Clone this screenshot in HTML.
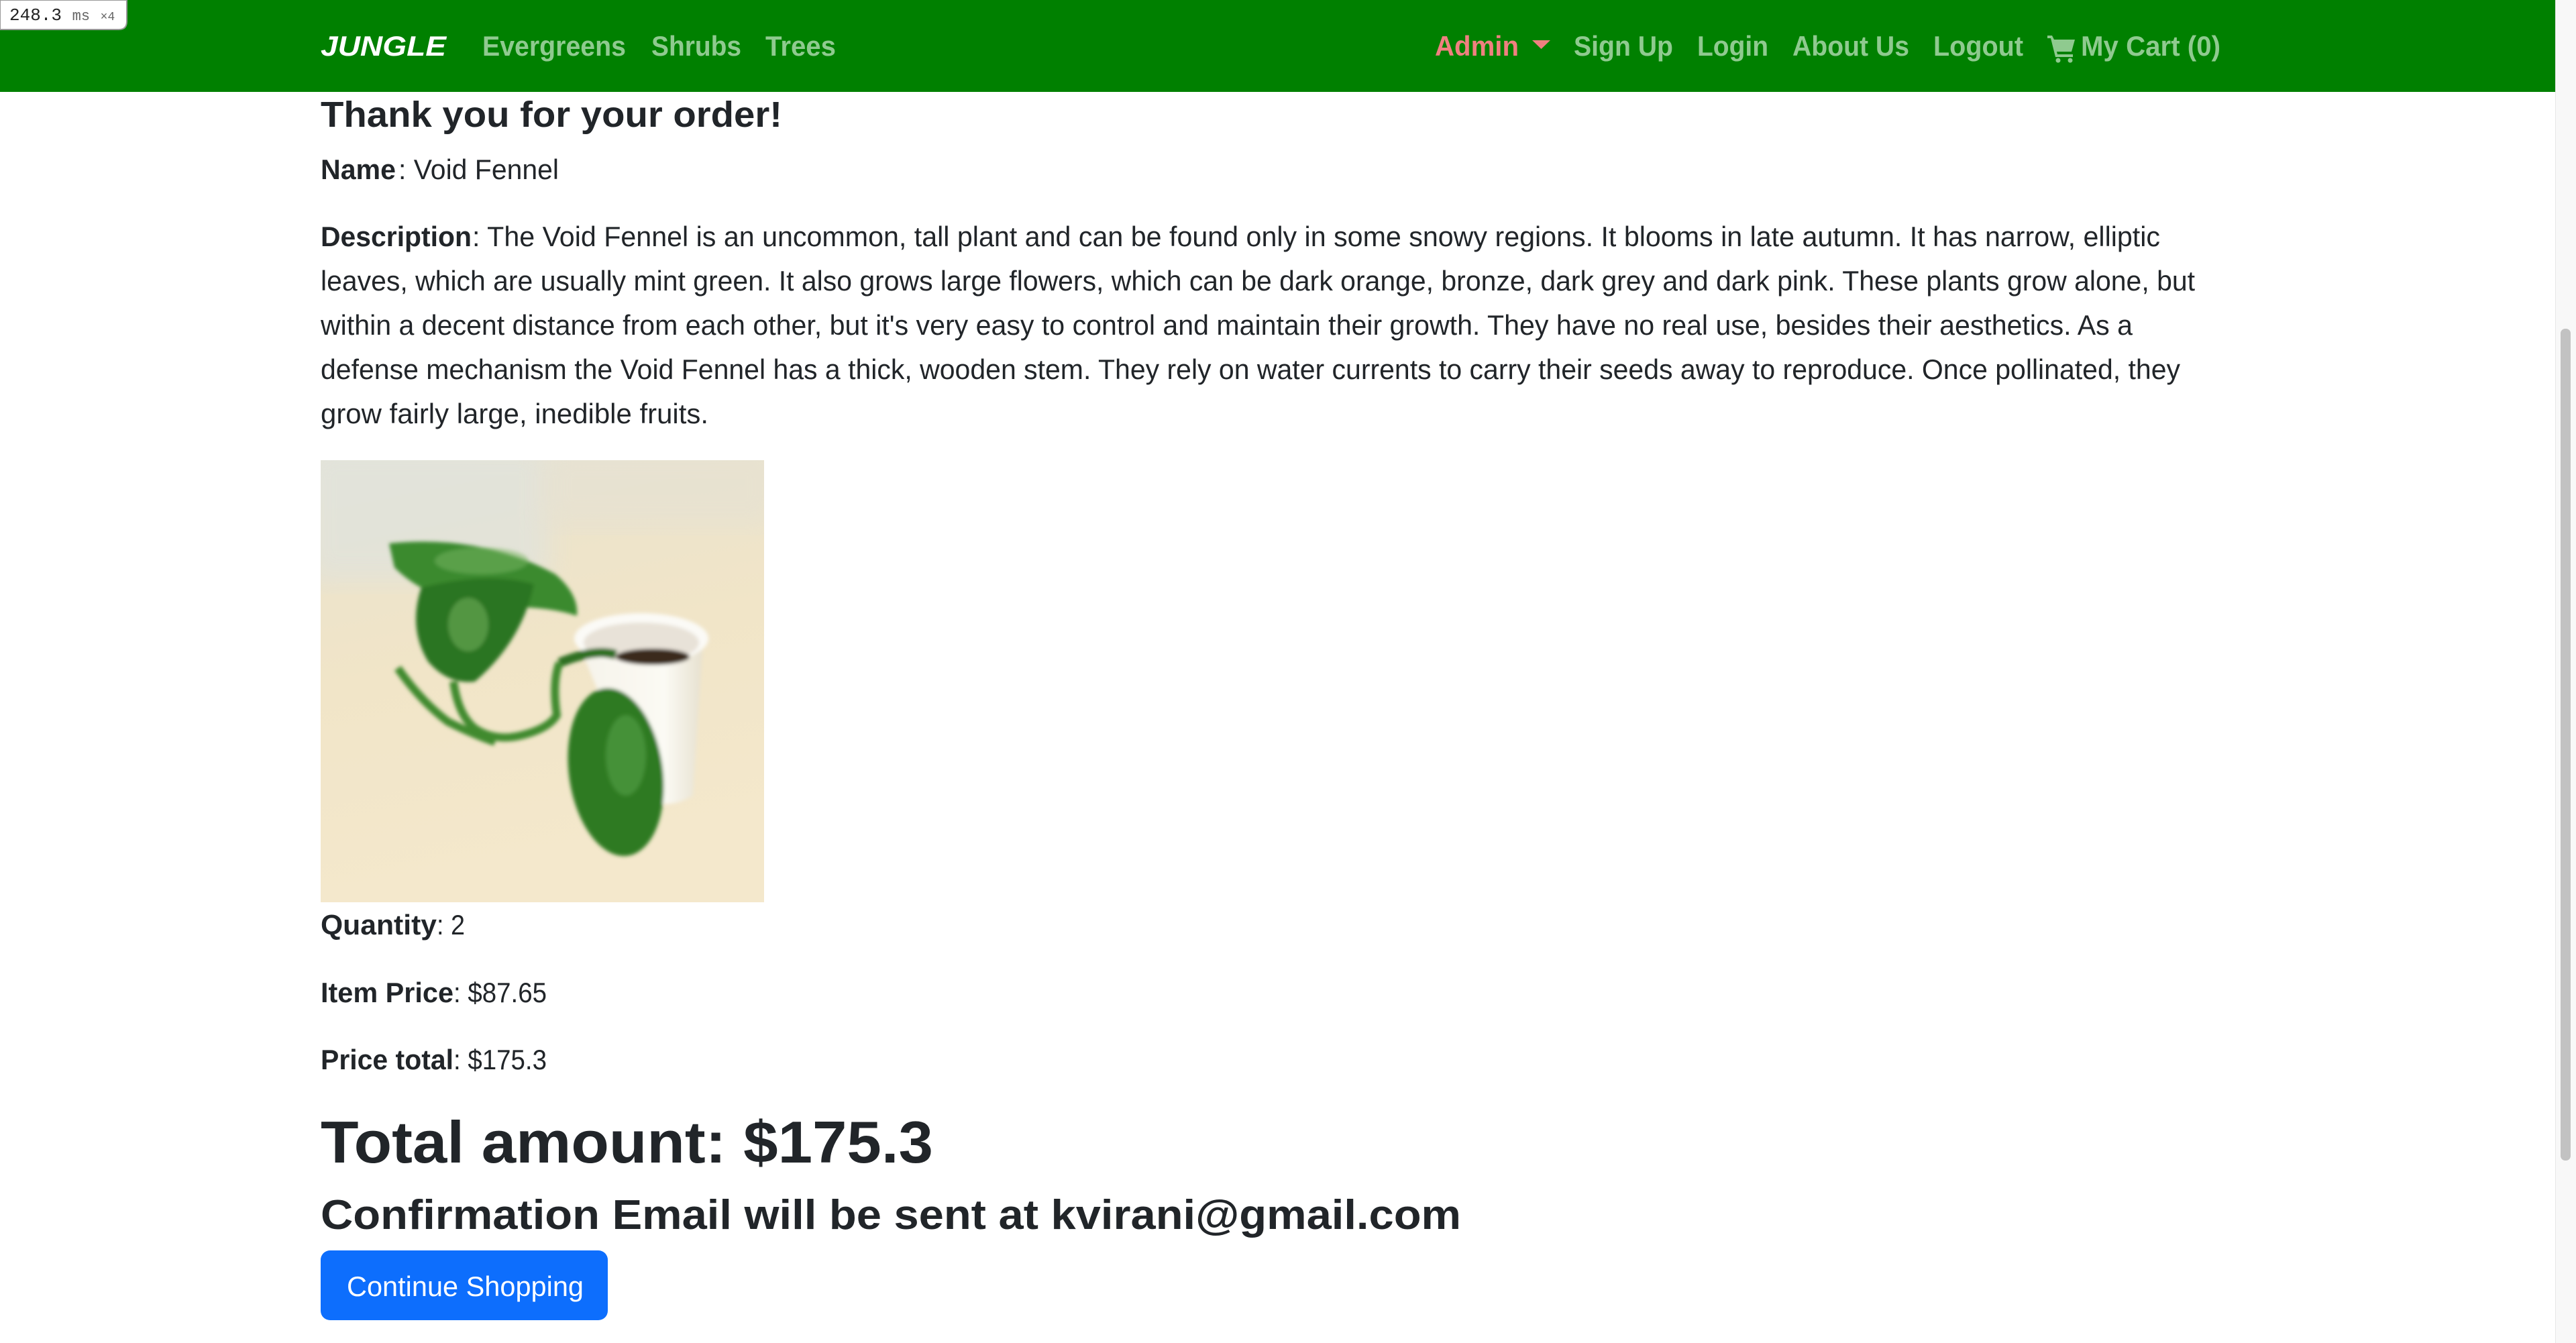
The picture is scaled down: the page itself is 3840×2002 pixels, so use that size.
<!DOCTYPE html>
<html><head><meta charset="utf-8"><style>
html,body{margin:0;padding:0;width:3840px;height:2002px;overflow:hidden;background:#fff}
svg{display:block}
</style></head><body>
<svg width="3840" height="2002" viewBox="0 0 3840 2002" xmlns="http://www.w3.org/2000/svg" font-family="Liberation Sans, sans-serif">
<rect x="0" y="0" width="3809" height="137" fill="#008000"/>
<rect x="3809" y="0" width="31" height="2002" fill="#f8f8f8"/>
<rect x="3809" y="0" width="1" height="2002" fill="#e6e6e6"/>
<rect x="3817" y="490" width="15" height="1240" rx="7" fill="#c2c2c2"/>
<path d="M0 0H189V32Q189 44 177 44H0Z" fill="#fff" stroke="#999" stroke-width="2"/>
<text x="14" y="30" font-family="Liberation Mono, monospace" font-size="26" fill="#222">248.3 <tspan fill="#666" font-size="22">ms</tspan> <tspan fill="#666" font-size="18">×4</tspan></text>
<g font-weight="bold" font-size="42">
<text x="478" y="83" fill="#fff" font-style="italic" font-weight="900" textLength="187" lengthAdjust="spacingAndGlyphs">JUNGLE</text>
<g fill="#8fca8f">
<text x="719" y="83" textLength="214" lengthAdjust="spacingAndGlyphs">Evergreens</text>
<text x="971" y="83" textLength="134" lengthAdjust="spacingAndGlyphs">Shrubs</text>
<text x="1141" y="83" textLength="105" lengthAdjust="spacingAndGlyphs">Trees</text>
<text x="2346" y="83" textLength="148" lengthAdjust="spacingAndGlyphs">Sign Up</text>
<text x="2530" y="83" textLength="106" lengthAdjust="spacingAndGlyphs">Login</text>
<text x="2672" y="83" textLength="174" lengthAdjust="spacingAndGlyphs">About Us</text>
<text x="2882" y="83" textLength="134" lengthAdjust="spacingAndGlyphs">Logout</text>
<text x="3102" y="83" textLength="208" lengthAdjust="spacingAndGlyphs">My Cart (0)</text>
<path d="M3052 53h7l3 6h31l-5 18h-22l1 4h23v4h-26l-7-28h-5z"/>
<circle cx="3068" cy="90" r="3.5"/><circle cx="3086" cy="90" r="3.5"/>
</g>
<text x="2139" y="83" fill="#f08080" textLength="125" lengthAdjust="spacingAndGlyphs">Admin</text>
<path d="M2284 60h27l-13.5 13z" fill="#f08080"/>
</g>
<g fill="#212529">
<text x="478" y="189" font-size="54" font-weight="bold" textLength="688" lengthAdjust="spacingAndGlyphs">Thank you for your order!</text>
<g font-size="42">
<text x="478" y="267" font-weight="bold" textLength="112" lengthAdjust="spacingAndGlyphs">Name</text>
<text x="594" y="267" textLength="239" lengthAdjust="spacingAndGlyphs">: Void Fennel</text>
<text x="478" y="367" font-weight="bold" textLength="225" lengthAdjust="spacingAndGlyphs">Description</text>
<text x="704" y="367" textLength="2516" lengthAdjust="spacingAndGlyphs">: The Void Fennel is an uncommon, tall plant and can be found only in some snowy regions. It blooms in late autumn. It has narrow, elliptic</text>
<text x="478" y="433" textLength="2794" lengthAdjust="spacingAndGlyphs">leaves, which are usually mint green. It also grows large flowers, which can be dark orange, bronze, dark grey and dark pink. These plants grow alone, but</text>
<text x="478" y="499" textLength="2701" lengthAdjust="spacingAndGlyphs">within a decent distance from each other, but it's very easy to control and maintain their growth. They have no real use, besides their aesthetics. As a</text>
<text x="478" y="565" textLength="2772" lengthAdjust="spacingAndGlyphs">defense mechanism the Void Fennel has a thick, wooden stem. They rely on water currents to carry their seeds away to reproduce. Once pollinated, they</text>
<text x="478" y="631" textLength="578" lengthAdjust="spacingAndGlyphs">grow fairly large, inedible fruits.</text>
<text x="478" y="1393" font-weight="bold" textLength="173" lengthAdjust="spacingAndGlyphs">Quantity</text>
<text x="651" y="1393" textLength="42" lengthAdjust="spacingAndGlyphs">: 2</text>
<text x="478" y="1494" font-weight="bold" textLength="198" lengthAdjust="spacingAndGlyphs">Item Price</text>
<text x="676" y="1494" textLength="139" lengthAdjust="spacingAndGlyphs">: $87.65</text>
<text x="478" y="1594" font-weight="bold" textLength="198" lengthAdjust="spacingAndGlyphs">Price total</text>
<text x="676" y="1594" textLength="139" lengthAdjust="spacingAndGlyphs">: $175.3</text>
</g>
<text x="478" y="1733" font-size="88" font-weight="bold" textLength="913" lengthAdjust="spacingAndGlyphs">Total amount: $175.3</text>
<text x="478" y="1832" font-size="62" font-weight="bold" textLength="1700" lengthAdjust="spacingAndGlyphs">Confirmation Email will be sent at kvirani@gmail.com</text>
</g>
<rect x="478" y="1864" width="428" height="104" rx="14" fill="#0d6efd"/>
<text x="517" y="1932" font-size="42" fill="#fff" textLength="353" lengthAdjust="spacingAndGlyphs">Continue Shopping</text>
<defs>
<linearGradient id="bg" x1="0" y1="0" x2="0.2" y2="1">
<stop offset="0" stop-color="#e6e4d8"/><stop offset="0.22" stop-color="#ece3cb"/><stop offset="0.5" stop-color="#f1e5c8"/><stop offset="1" stop-color="#f4e8cc"/>
</linearGradient>
<linearGradient id="pot" x1="0" y1="0" x2="1" y2="0">
<stop offset="0" stop-color="#f6f3ea"/><stop offset="0.7" stop-color="#fbfaf4"/><stop offset="1" stop-color="#e6e0cf"/>
</linearGradient>
<filter id="bl"><feGaussianBlur stdDeviation="3"/></filter>
<filter id="bl2"><feGaussianBlur stdDeviation="20"/></filter>
<clipPath id="ic"><rect width="661" height="659"/></clipPath>
</defs>
<g transform="translate(478,686)">
<g clip-path="url(#ic)">
<rect width="661" height="659" fill="url(#bg)"/>
<rect x="-20" y="-20" width="360" height="200" fill="#e1e3dc" opacity="0.8" filter="url(#bl2)"/>
<rect x="330" y="-20" width="350" height="120" fill="#e6e2d3" opacity="0.7" filter="url(#bl2)"/>
<g filter="url(#bl)">
<path d="M382 268 L570 265 L555 500 Q520 522 480 505 Z" fill="url(#pot)"/>
<ellipse cx="478" cy="266" rx="100" ry="38" fill="#fbfaf6"/>
<ellipse cx="478" cy="272" rx="86" ry="30" fill="#e8e2d8"/>
<ellipse cx="495" cy="293" rx="55" ry="12" fill="#3a2a1e"/>
<path d="M356 302 Q410 280 440 290" stroke="#2f6f24" stroke-width="14" fill="none"/>
<path d="M356 302 Q345 330 352 380 Q340 400 300 410 Q260 420 230 400 Q205 380 198 330" stroke="#3f8a2f" stroke-width="12" fill="none"/>
<path d="M115 310 Q150 360 190 390 Q230 410 260 420" stroke="#3f8a2f" stroke-width="12" fill="none"/>
<path d="M102 124 Q240 110 350 170 Q385 200 382 232 Q330 215 250 220 Q160 210 110 160 Z" fill="#3b8a2e"/>
<path d="M150 190 Q250 165 318 185 Q300 270 230 330 Q190 335 160 300 Q130 250 150 190 Z" fill="#2a7420"/>
<ellipse cx="440" cy="465" rx="70" ry="126" transform="rotate(-8 440 465)" fill="#2e7a24"/>
<ellipse cx="455" cy="440" rx="30" ry="60" fill="#5ca84a" opacity="0.5"/>
<ellipse cx="220" cy="245" rx="30" ry="40" fill="#7ab866" opacity="0.5"/>
<ellipse cx="240" cy="150" rx="70" ry="20" fill="#79b664" opacity="0.5"/>
</g>
</g>
</g>
</svg>
</body></html>
